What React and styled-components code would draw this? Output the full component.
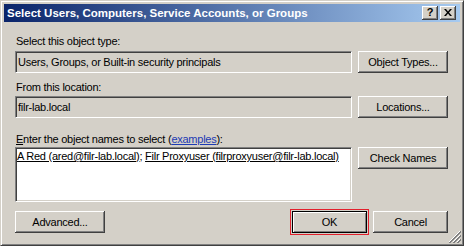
import React from "react";
import styled, { createGlobalStyle } from "styled-components";

const GlobalStyle = createGlobalStyle`
  html, body { margin: 0; padding: 0; background: #d4d0c8; }
  body { font-family: "Liberation Sans", Arial, sans-serif; font-size: 11px; color: #000; }
  * { box-sizing: border-box; }
`;

const Window = styled.div`
  position: relative;
  width: 464px;
  height: 246px;
  background: #d4d0c8;
  border: 1px solid;
  border-color: #d4d0c8 #404040 #404040 #d4d0c8;
  box-shadow: inset 1px 1px #ffffff, inset -1px -1px #808080;
  padding: 3px;
  display: flex;
  flex-direction: column;
`;

const TitleBar = styled.div`
  height: 18px;
  flex: none;
  display: flex;
  align-items: center;
  padding: 0 4px 0 3px;
  background: linear-gradient(to right, #0a246a, #a6caf0);
`;

const TitleText = styled.div`
  flex: 1;
  color: #fff;
  font-weight: bold;
  font-size: 11.5px;
  line-height: 14px;
  white-space: nowrap;
`;

const TitleButtons = styled.div`
  display: flex;
  gap: 2px;
`;

const TitleButton = styled.div`
  width: 16px;
  height: 14px;
  background: #d4d0c8;
  box-shadow: inset -1px -1px #404040, inset 1px 1px #ffffff, inset -2px -2px #808080;
  display: flex;
  align-items: center;
  justify-content: center;
  font-weight: bold;
  font-size: 11px;
  line-height: 11px;
  padding-bottom: 1px;
`;

const Body = styled.div`
  flex: 1;
  display: flex;
  flex-direction: column;
  padding: 13px 12px 0 11px;
`;

const Label = styled.div`
  line-height: 13px;
  padding-left: 1px;
  letter-spacing: -0.25px;
  margin-top: ${(p) => p.$top || 0}px;
  margin-bottom: ${(p) => p.$bottom || 3}px;
  white-space: nowrap;
`;

const Row = styled.div`
  display: flex;
  align-items: flex-start;
  gap: 6px;
`;

const Field = styled.div`
  width: 337px;
  height: ${(p) => p.$h || 22}px;
  background: ${(p) => (p.$white ? "#ffffff" : "#d4d0c8")};
  border: 1px solid;
  border-color: #808080 #ffffff #ffffff #808080;
  box-shadow: inset 1px 1px #404040, inset -1px -1px #d4d0c8;
  display: flex;
  align-items: ${(p) => (p.$white ? "flex-start" : "center")};
  padding: ${(p) => (p.$white ? "2px 1px" : "0 2px")};
  line-height: 13px;
  letter-spacing: -0.25px;
  white-space: nowrap;
  overflow: hidden;
`;

const Button = styled.div`
  width: ${(p) => p.$w || 75}px;
  height: 22px;
  flex: none;
  background: #d4d0c8;
  display: flex;
  align-items: center;
  justify-content: center;
  letter-spacing: -0.25px;
  line-height: 13px;
  box-shadow: ${(p) =>
    p.$default
      ? "inset 0 0 0 1px #000, inset 1px 1px 0 1px #fff, inset -1px -1px 0 1px #808080"
      : "inset -1px -1px #404040, inset 1px 1px #ffffff, inset -2px -2px #808080"};
  outline: ${(p) => (p.$default ? "1px solid #e2202c" : "none")};
  outline-offset: 1px;
`;

const ButtonRow = styled.div`
  display: flex;
  gap: 6px;
  margin-top: 9px;
`;

const Spacer = styled.div`
  flex: 1;
`;

const Link = styled.span`
  color: #1c3bb4;
  text-decoration: underline;
`;

const Name = styled.span`
  text-decoration: underline;
`;

const Grip = styled.svg`
  position: absolute;
  right: 2px;
  bottom: 2px;
`;

export default function App() {
  return (
    <>
      <GlobalStyle />
      <Window>
        <TitleBar>
          <TitleText>Select Users, Computers, Service Accounts, or Groups</TitleText>
          <TitleButtons>
            <TitleButton>?</TitleButton>
            <TitleButton>
              <svg width="8" height="7" viewBox="0 0 8 7">
                <path d="M0 0h2l2 2.5L6 0h2L5 3.5 8 7H6L4 4.5 2 7H0l3-3.5z" fill="#000" />
              </svg>
            </TitleButton>
          </TitleButtons>
        </TitleBar>
        <Body>
          <Label>Select this object type:</Label>
          <Row>
            <Field>Users, Groups, or Built-in security principals</Field>
            <Button $w={90}>Object Types...</Button>
          </Row>
          <Label $top={8} $bottom={2}>From this location:</Label>
          <Row>
            <Field>filr-lab.local</Field>
            <Button $w={90}>Locations...</Button>
          </Row>
          <Label $top={15} $bottom={1}>
            <u>E</u>nter the object names to select (<Link>examples</Link>):
          </Label>
          <Row>
            <Field $white $h={55}>
              <Name>A Red (ared@filr-lab.local)</Name>;&nbsp;
              <Name>Filr Proxyuser (filrproxyuser@filr-lab.local)</Name>
            </Field>
            <Button $w={90}>Check Names</Button>
          </Row>
          <ButtonRow>
            <Button $w={90}>Advanced...</Button>
            <Spacer />
            <Button $default>OK</Button>
            <Button>Cancel</Button>
          </ButtonRow>
        </Body>
        <Grip width="12" height="12" viewBox="0 0 12 12">
          <path d="M11 0L0 11M11 4L4 11M11 8L8 11" stroke="#ffffff" strokeWidth="1" />
          <path d="M12 0L0 12M12 1L1 12M12 4L4 12M12 5L5 12M12 8L8 12M12 9L9 12" stroke="#808080" strokeWidth="1" />
        </Grip>
      </Window>
    </>
  );
}
